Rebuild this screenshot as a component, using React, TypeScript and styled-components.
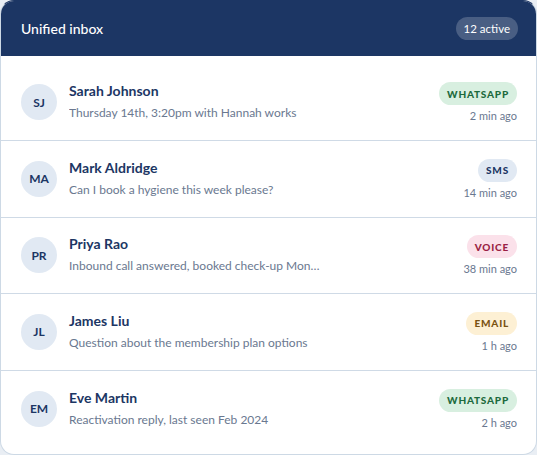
import React from "react";
import styled, { createGlobalStyle } from "styled-components";

const Global = createGlobalStyle`
  html, body { margin: 0; padding: 0; background: #e9eef4; }
  body { font-family: "Lato", "Noto Sans", sans-serif; }
  * { box-sizing: border-box; }
`;

type Channel = "whatsapp" | "sms" | "voice" | "email";

const channelColors: Record<Channel, { bg: string; fg: string }> = {
  whatsapp: { bg: "#d8efe0", fg: "#1d6a3d" },
  sms: { bg: "#e1e9f3", fg: "#1c3664" },
  voice: { bg: "#fbe1ea", fg: "#9a1f44" },
  email: { bg: "#fdf0d4", fg: "#7a5312" },
};

const Card = styled.div`
  width: 537px;
  height: 455px;
  background: #ffffff;
  border: 1px solid #cdd9e5;
  border-top-color: #1c3664;
  border-radius: 14px;
  overflow: hidden;
  display: flex;
  flex-direction: column;
`;

const Header = styled.div`
  height: 55px;
  flex: none;
  background: #1c3664;
  display: flex;
  align-items: center;
  justify-content: space-between;
  padding: 0 18px 0 20px;
`;

const Title = styled.div`
  color: #ffffff;
  font-size: 14px;
  font-weight: 500;
`;

const CountPill = styled.div`
  height: 23px;
  padding: 0 8px;
  border-radius: 12px;
  background: rgba(255, 255, 255, 0.2);
  color: #ffffff;
  font-size: 11.5px;
  display: flex;
  align-items: center;
`;

const List = styled.div`
  padding: 8px 0;
  display: flex;
  flex-direction: column;
`;

const Row = styled.div`
  height: 76.6px;
  display: flex;
  align-items: center;
  padding: 0 19px 0 20px;
  gap: 12px;
  border-top: 1px solid #cfdae6;
  &:first-child { border-top: none; height: 76px; }
`;

const Avatar = styled.div`
  width: 36px;
  height: 36px;
  flex: none;
  border-radius: 50%;
  background: #e1e9f3;
  color: #1c3664;
  font-size: 12px;
  font-weight: 700;
  display: flex;
  align-items: center;
  justify-content: center;
`;

const Body = styled.div`
  flex: 1;
  min-width: 0;
  display: flex;
  flex-direction: column;
  gap: 6px;
  padding-bottom: 1px;
`;

const Name = styled.div`
  color: #1c3664;
  font-size: 14px;
  font-weight: 700;
  line-height: 17px;
`;

const Preview = styled.div`
  color: #6a7890;
  font-size: 12px;
  line-height: 16px;
  white-space: nowrap;
  overflow: hidden;
  text-overflow: ellipsis;
`;

const Meta = styled.div`
  flex: none;
  display: flex;
  flex-direction: column;
  align-items: flex-end;
  gap: 4px;
  padding-top: 1px;
`;

const Tag = styled.div<{ $channel: Channel }>`
  height: 23px;
  padding: 0 8px;
  border-radius: 12px;
  display: flex;
  align-items: center;
  font-size: 10px;
  font-weight: 900;
  letter-spacing: 0.8px;
  background: ${(p) => channelColors[p.$channel].bg};
  color: ${(p) => channelColors[p.$channel].fg};
`;

const Time = styled.div`
  color: #6a7890;
  font-size: 11px;
  line-height: 14px;
`;

const messages: {
  initials: string;
  name: string;
  preview: string;
  channel: Channel;
  label: string;
  time: string;
}[] = [
  { initials: "SJ", name: "Sarah Johnson", preview: "Thursday 14th, 3:20pm with Hannah works", channel: "whatsapp", label: "WHATSAPP", time: "2 min ago" },
  { initials: "MA", name: "Mark Aldridge", preview: "Can I book a hygiene this week please?", channel: "sms", label: "SMS", time: "14 min ago" },
  { initials: "PR", name: "Priya Rao", preview: "Inbound call answered, booked check-up Mon…", channel: "voice", label: "VOICE", time: "38 min ago" },
  { initials: "JL", name: "James Liu", preview: "Question about the membership plan options", channel: "email", label: "EMAIL", time: "1 h ago" },
  { initials: "EM", name: "Eve Martin", preview: "Reactivation reply, last seen Feb 2024", channel: "whatsapp", label: "WHATSAPP", time: "2 h ago" },
];

export default function App() {
  return (
    <>
      <Global />
      <Card>
        <Header>
          <Title>Unified inbox</Title>
          <CountPill>12 active</CountPill>
        </Header>
        <List>
          {messages.map((m) => (
            <Row key={m.initials}>
              <Avatar>{m.initials}</Avatar>
              <Body>
                <Name>{m.name}</Name>
                <Preview>{m.preview}</Preview>
              </Body>
              <Meta>
                <Tag $channel={m.channel}>{m.label}</Tag>
                <Time>{m.time}</Time>
              </Meta>
            </Row>
          ))}
        </List>
      </Card>
    </>
  );
}
